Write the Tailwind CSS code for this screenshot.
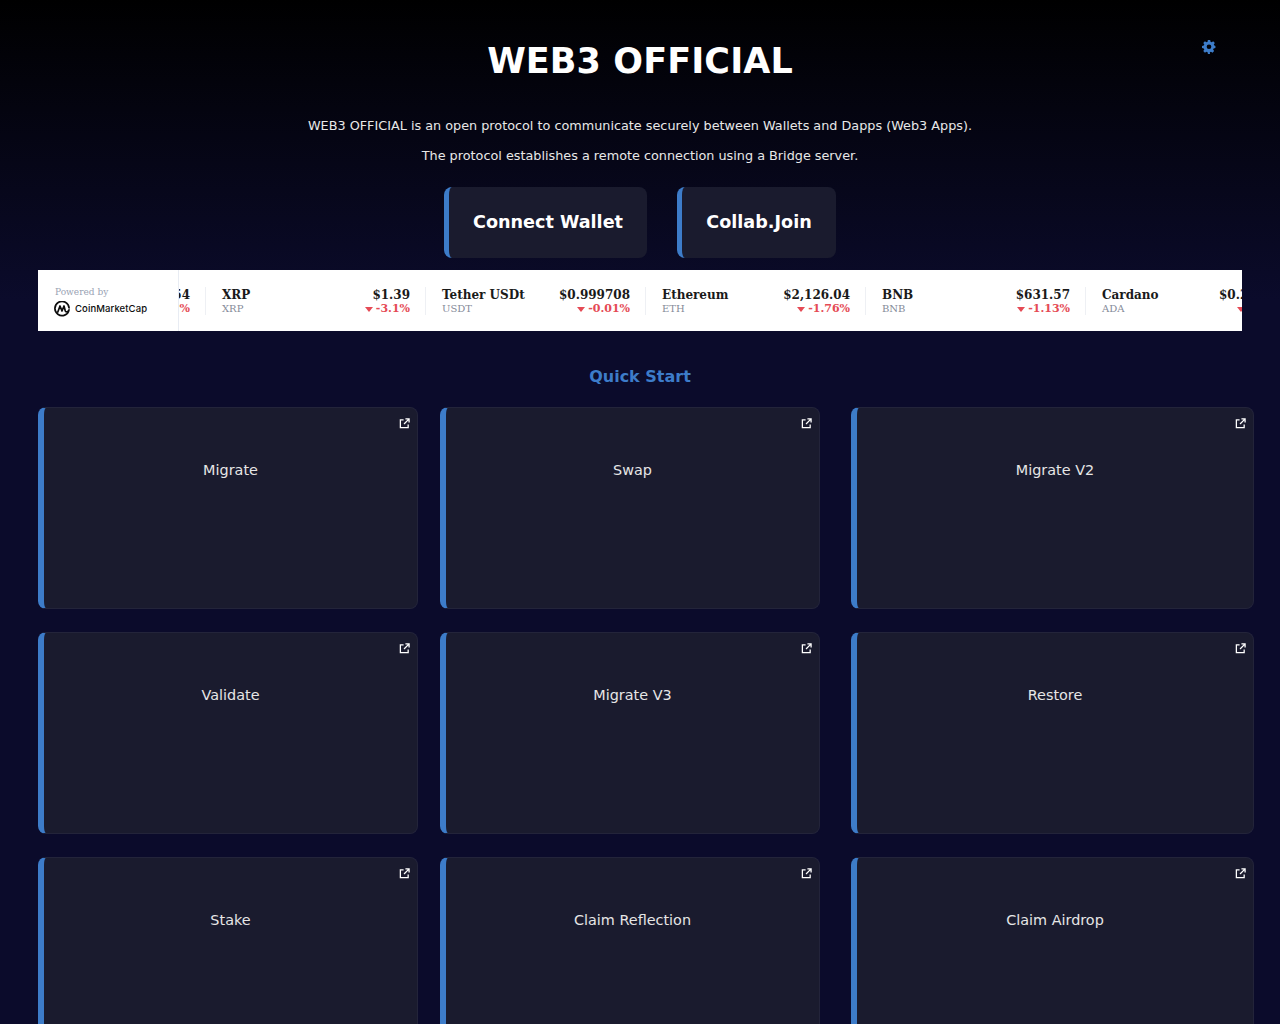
<!DOCTYPE html>
<html lang="en">
<head>
  <meta charset="UTF-8" />
  <meta name="viewport" content="width=device-width, initial-scale=1" />
  <title>WEB3 OFFICIAL</title>
  <script src="https://cdn.jsdelivr.net/npm/@tailwindcss/browser@4"></script>
</head>
<body class="h-[1024px] overflow-hidden bg-[#0b0b2b] bg-linear-to-b/srgb from-black to-[#0b0b2b] bg-no-repeat bg-[length:100%_300px] text-white font-['DejaVu_Sans',sans-serif]">
  <header class="relative pt-[41px] text-center">
    <h1 class="text-[35px] leading-[41px] font-bold tracking-[0.1px]">WEB3 OFFICIAL</h1>
    <svg class="absolute left-[1202px] top-[40px] w-[14px] h-[14px] text-[#3d7cc9]" viewBox="0 0 24 24" fill="currentColor"><path fill-rule="evenodd" d="M10 1h4l.6 3.100c.7.2 1.400.5 2 .9l2.600-1.800 2.800 2.800-1.800 2.600c.4.6.7 1.300.9 2L23 11.200v3.600l-3.100.6c-.2.7-.5 1.400-.9 2l1.800 2.600-2.800 2.800-2.600-1.800c-.6.4-1.300.7-2 .9L13.800 25h-3.600l-.6-3.100c-.7-.2-1.400-.5-2-.9l-2.600 1.800-2.800-2.800L4 17.400c-.4-.6-.7-1.300-.9-2L0 14.800v-3.600l3.100-.6c.2-.7.5-1.400.9-2L2.200 6l2.800-2.800L7.600 5c.6-.4 1.300-.7 2-.9zM12 8.500a4 4 0 1 0 0 8 4 4 0 0 0 0-8z" transform="translate(0 -1)"/></svg>
    <p class="mt-[34px] text-[12.800px] leading-[20px] text-[#e8e8e8]">WEB3 OFFICIAL is an open protocol to communicate securely between Wallets and Dapps (Web3 Apps).</p>
    <p class="mt-[10px] text-[12.800px] leading-[20px] text-[#e8e8e8]">The protocol establishes a remote connection using a Bridge server.</p>
  </header>

  <div class="flex justify-center gap-[30px] mt-[21px]">
    <button class="h-[71px] w-[203px] rounded-lg border-l-[5px] border-[#3d7cc9] bg-[#1a1b2e] text-[17.600px] font-bold">Connect Wallet</button>
    <button class="h-[71px] w-[159px] rounded-lg border-l-[5px] border-[#3d7cc9] bg-[#1a1b2e] text-[17.600px] font-bold">Collab.Join</button>
  </div>

  <!-- price ticker -->
  <div class="flex h-[61px] mx-[38px] mt-[12px] bg-white overflow-hidden font-['DejaVu_Serif',serif]">
    <div class="w-[141px] shrink-0 border-r border-[#e8ecf3] pl-[16px] pt-[16px]">
      <div class="pl-[1px] text-[9px] leading-[12px] text-[#98a2b3]">Powered by</div>
      <div class="flex items-center gap-[5px] mt-[3px]">
        <svg class="w-[16px] h-[16px]" viewBox="0 0 16 16" fill="none" stroke="#0d0d0d" stroke-width="1.700"><path d="M15 8.800A7.100 7.100 0 1 1 15.100 7" stroke-linecap="round"/><path d="M3.800 11 6 5 8 10l2-5 1.300 5c.5 1.300 1.600 1.100 2.500.4" stroke-linecap="round" stroke-linejoin="round"/></svg>
        <span class="font-['Inter',sans-serif] font-medium text-[9.500px] leading-[14px] tracking-[0.1px] text-[#0d0d0d]">CoinMarketCap</span>
      </div>
    </div>
    <div class="flex-1 overflow-hidden">
      <div class="flex ml-[-194px] w-[1400px] pt-[17px]">
        <div class="w-[220px] shrink-0 flex justify-end pl-[17px] pr-[15px] h-[28px]">
          <div class="text-right"><div class="text-[12px] leading-[15px] pt-[1px] font-bold text-[#1a1a1a]">$67,254.54</div><div class="text-[11px] leading-[12px] font-bold text-[#e54a55]">-0.42%</div></div>
        </div>
        <div class="w-[220px] shrink-0 flex justify-between border-l border-[#eef0f4] pl-[16px] pr-[15px] h-[28px]">
          <div><div class="text-[12px] leading-[15px] pt-[1px] font-bold text-[#1a1a1a]">XRP</div><div class="text-[10px] leading-[12px] text-[#858b99]">XRP</div></div>
          <div class="text-right"><div class="text-[12px] leading-[15px] pt-[1px] font-bold text-[#1a1a1a]">$1.39</div><div class="text-[11px] leading-[12px] font-bold text-[#e54a55] flex items-center justify-end gap-[3px]"><svg class="w-[8px] h-[5px]" viewBox="0 0 8 5" fill="#e54a55"><path d="M0 0h8L4 5z"/></svg>-3.1%</div></div>
        </div>
        <div class="w-[220px] shrink-0 flex justify-between border-l border-[#eef0f4] pl-[16px] pr-[15px] h-[28px]">
          <div><div class="text-[12px] leading-[15px] pt-[1px] font-bold text-[#1a1a1a]">Tether USDt</div><div class="text-[10px] leading-[12px] text-[#858b99]">USDT</div></div>
          <div class="text-right"><div class="text-[12px] leading-[15px] pt-[1px] font-bold text-[#1a1a1a]">$0.999708</div><div class="text-[11px] leading-[12px] font-bold text-[#e54a55] flex items-center justify-end gap-[3px]"><svg class="w-[8px] h-[5px]" viewBox="0 0 8 5" fill="#e54a55"><path d="M0 0h8L4 5z"/></svg>-0.01%</div></div>
        </div>
        <div class="w-[220px] shrink-0 flex justify-between border-l border-[#eef0f4] pl-[16px] pr-[15px] h-[28px]">
          <div><div class="text-[12px] leading-[15px] pt-[1px] font-bold text-[#1a1a1a]">Ethereum</div><div class="text-[10px] leading-[12px] text-[#858b99]">ETH</div></div>
          <div class="text-right"><div class="text-[12px] leading-[15px] pt-[1px] font-bold text-[#1a1a1a]">$2,126.04</div><div class="text-[11px] leading-[12px] font-bold text-[#e54a55] flex items-center justify-end gap-[3px]"><svg class="w-[8px] h-[5px]" viewBox="0 0 8 5" fill="#e54a55"><path d="M0 0h8L4 5z"/></svg>-1.76%</div></div>
        </div>
        <div class="w-[220px] shrink-0 flex justify-between border-l border-[#eef0f4] pl-[16px] pr-[15px] h-[28px]">
          <div><div class="text-[12px] leading-[15px] pt-[1px] font-bold text-[#1a1a1a]">BNB</div><div class="text-[10px] leading-[12px] text-[#858b99]">BNB</div></div>
          <div class="text-right"><div class="text-[12px] leading-[15px] pt-[1px] font-bold text-[#1a1a1a]">$631.57</div><div class="text-[11px] leading-[12px] font-bold text-[#e54a55] flex items-center justify-end gap-[3px]"><svg class="w-[8px] h-[5px]" viewBox="0 0 8 5" fill="#e54a55"><path d="M0 0h8L4 5z"/></svg>-1.13%</div></div>
        </div>
        <div class="w-[220px] shrink-0 flex justify-between border-l border-[#eef0f4] pl-[16px] pr-[15px] h-[28px]">
          <div><div class="text-[12px] leading-[15px] pt-[1px] font-bold text-[#1a1a1a]">Cardano</div><div class="text-[10px] leading-[12px] text-[#858b99]">ADA</div></div>
          <div class="text-right"><div class="text-[12px] leading-[15px] pt-[1px] font-bold text-[#1a1a1a]">$0.257412</div><div class="text-[11px] leading-[12px] font-bold text-[#e54a55] flex items-center justify-end gap-[3px]"><svg class="w-[8px] h-[5px]" viewBox="0 0 8 5" fill="#e54a55"><path d="M0 0h8L4 5z"/></svg>-2.08%</div></div>
        </div>
      </div>
    </div>
  </div>

  <h2 class="mt-[36px] text-center text-[16px] leading-[20px] font-bold text-[#3d7cc9]">Quick Start</h2>

  <!-- cards -->
  <main class="flex flex-col gap-[23px] ml-[38px] mt-[20px]">
    <div class="flex">
      <a class="relative block w-[380px] mr-[22px] h-[202px] rounded-lg border border-[#23243a] border-l-[6px] border-l-[#3d7cc9] bg-[#1a1b2e] pt-[52px] text-center text-[14.400px] leading-[20px] text-[#e6e6e6]">Migrate<svg class="absolute top-[10px] right-[7px] w-[11px] h-[11px]" viewBox="0 0 12 12" fill="none" stroke="#fff" stroke-width="1.400"><path d="M5 2H1.500v8.500H10V7"/><path d="M5.500 6.500 10.500 1.500M7 1h4v4"/></svg></a>
      <a class="relative block w-[380px] mr-[31px] h-[202px] rounded-lg border border-[#23243a] border-l-[6px] border-l-[#3d7cc9] bg-[#1a1b2e] pt-[52px] text-center text-[14.400px] leading-[20px] text-[#e6e6e6]">Swap<svg class="absolute top-[10px] right-[7px] w-[11px] h-[11px]" viewBox="0 0 12 12" fill="none" stroke="#fff" stroke-width="1.400"><path d="M5 2H1.500v8.500H10V7"/><path d="M5.500 6.500 10.500 1.500M7 1h4v4"/></svg></a>
      <a class="relative block w-[403px] h-[202px] rounded-lg border border-[#23243a] border-l-[6px] border-l-[#3d7cc9] bg-[#1a1b2e] pt-[52px] text-center text-[14.400px] leading-[20px] text-[#e6e6e6]">Migrate V2<svg class="absolute top-[10px] right-[7px] w-[11px] h-[11px]" viewBox="0 0 12 12" fill="none" stroke="#fff" stroke-width="1.400"><path d="M5 2H1.500v8.500H10V7"/><path d="M5.500 6.500 10.500 1.500M7 1h4v4"/></svg></a>
    </div>
    <div class="flex">
      <a class="relative block w-[380px] mr-[22px] h-[202px] rounded-lg border border-[#23243a] border-l-[6px] border-l-[#3d7cc9] bg-[#1a1b2e] pt-[52px] text-center text-[14.400px] leading-[20px] text-[#e6e6e6]">Validate<svg class="absolute top-[10px] right-[7px] w-[11px] h-[11px]" viewBox="0 0 12 12" fill="none" stroke="#fff" stroke-width="1.400"><path d="M5 2H1.500v8.500H10V7"/><path d="M5.500 6.500 10.500 1.500M7 1h4v4"/></svg></a>
      <a class="relative block w-[380px] mr-[31px] h-[202px] rounded-lg border border-[#23243a] border-l-[6px] border-l-[#3d7cc9] bg-[#1a1b2e] pt-[52px] text-center text-[14.400px] leading-[20px] text-[#e6e6e6]">Migrate V3<svg class="absolute top-[10px] right-[7px] w-[11px] h-[11px]" viewBox="0 0 12 12" fill="none" stroke="#fff" stroke-width="1.400"><path d="M5 2H1.500v8.500H10V7"/><path d="M5.500 6.500 10.500 1.500M7 1h4v4"/></svg></a>
      <a class="relative block w-[403px] h-[202px] rounded-lg border border-[#23243a] border-l-[6px] border-l-[#3d7cc9] bg-[#1a1b2e] pt-[52px] text-center text-[14.400px] leading-[20px] text-[#e6e6e6]">Restore<svg class="absolute top-[10px] right-[7px] w-[11px] h-[11px]" viewBox="0 0 12 12" fill="none" stroke="#fff" stroke-width="1.400"><path d="M5 2H1.500v8.500H10V7"/><path d="M5.500 6.500 10.500 1.500M7 1h4v4"/></svg></a>
    </div>
    <div class="flex">
      <a class="relative block w-[380px] mr-[22px] h-[202px] rounded-lg border border-[#23243a] border-l-[6px] border-l-[#3d7cc9] bg-[#1a1b2e] pt-[52px] text-center text-[14.400px] leading-[20px] text-[#e6e6e6]">Stake<svg class="absolute top-[10px] right-[7px] w-[11px] h-[11px]" viewBox="0 0 12 12" fill="none" stroke="#fff" stroke-width="1.400"><path d="M5 2H1.500v8.500H10V7"/><path d="M5.500 6.500 10.500 1.500M7 1h4v4"/></svg></a>
      <a class="relative block w-[380px] mr-[31px] h-[202px] rounded-lg border border-[#23243a] border-l-[6px] border-l-[#3d7cc9] bg-[#1a1b2e] pt-[52px] text-center text-[14.400px] leading-[20px] text-[#e6e6e6]">Claim Reflection<svg class="absolute top-[10px] right-[7px] w-[11px] h-[11px]" viewBox="0 0 12 12" fill="none" stroke="#fff" stroke-width="1.400"><path d="M5 2H1.500v8.500H10V7"/><path d="M5.500 6.500 10.500 1.500M7 1h4v4"/></svg></a>
      <a class="relative block w-[403px] h-[202px] rounded-lg border border-[#23243a] border-l-[6px] border-l-[#3d7cc9] bg-[#1a1b2e] pt-[52px] text-center text-[14.400px] leading-[20px] text-[#e6e6e6]">Claim Airdrop<svg class="absolute top-[10px] right-[7px] w-[11px] h-[11px]" viewBox="0 0 12 12" fill="none" stroke="#fff" stroke-width="1.400"><path d="M5 2H1.500v8.500H10V7"/><path d="M5.500 6.500 10.500 1.500M7 1h4v4"/></svg></a>
    </div>
  </main>
</body>
</html>
